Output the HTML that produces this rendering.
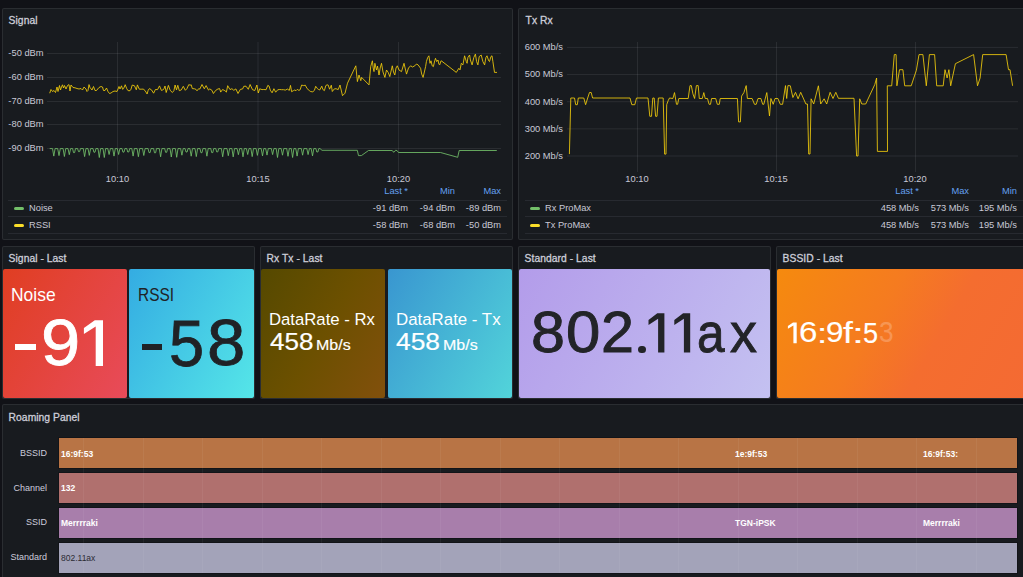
<!DOCTYPE html>
<html><head><meta charset="utf-8">
<style>
*{box-sizing:border-box;margin:0;padding:0}
html,body{width:1023px;height:577px;overflow:hidden;background:#111217;font-family:"Liberation Sans", sans-serif;color:#ccccdc}
.p{position:absolute;background:#181b1f;border:1px solid rgba(204,204,220,0.10);border-radius:2px;overflow:hidden}
.t{position:absolute;font-size:10.3px;letter-spacing:0.05px;font-weight:normal;-webkit-text-stroke:0.3px #cdced9;color:#cdced9;white-space:nowrap}
.a{position:absolute;font-size:9.3px;color:#c8c9d6;white-space:nowrap}
.ar{text-align:right}
.ac{text-align:center}
.lg{position:absolute;height:1px;background:rgba(204,204,220,0.09)}
.hd{position:absolute;font-size:9.3px;color:#64a0f0;white-space:nowrap;text-align:right}
.box{position:absolute;overflow:hidden;border-radius:2px}
.sw{position:absolute;width:10px;height:3px;border-radius:2px}
.bar{position:absolute;left:59px;width:957.5px;height:30.2px;box-shadow:0 0 0 1px rgba(12,13,17,0.5)}
.bt{position:absolute;font-size:8.5px;font-weight:bold;color:#fff;white-space:nowrap}
.bl{position:absolute;font-size:9px;color:#ccccdc;text-align:right;width:40px;left:7px}
</style></head><body>
<div class="p" style="left:2px;top:8px;width:511px;height:232px"></div>
<div class="p" style="left:518px;top:8px;width:520px;height:232px"></div>
<div class="t" style="left:8.6px;top:14.5px">Signal</div>
<div class="t" style="left:525.6px;top:14.5px">Tx Rx</div>
<svg style="position:absolute;left:0;top:0" width="1023" height="577"><line x1="47" y1="53.5" x2="501" y2="53.5" stroke="rgba(204,204,220,0.10)" stroke-width="1"/><line x1="47" y1="77.5" x2="501" y2="77.5" stroke="rgba(204,204,220,0.10)" stroke-width="1"/><line x1="47" y1="101.5" x2="501" y2="101.5" stroke="rgba(204,204,220,0.10)" stroke-width="1"/><line x1="47" y1="124.5" x2="501" y2="124.5" stroke="rgba(204,204,220,0.10)" stroke-width="1"/><line x1="47" y1="148.5" x2="501" y2="148.5" stroke="rgba(204,204,220,0.10)" stroke-width="1"/><line x1="117.5" y1="42" x2="117.5" y2="172" stroke="rgba(204,204,220,0.10)" stroke-width="1"/><line x1="258" y1="42" x2="258" y2="172" stroke="rgba(204,204,220,0.10)" stroke-width="1"/><line x1="398.5" y1="42" x2="398.5" y2="172" stroke="rgba(204,204,220,0.10)" stroke-width="1"/><line x1="567" y1="47.4" x2="1018" y2="47.4" stroke="rgba(204,204,220,0.10)" stroke-width="1"/><line x1="567" y1="74.55" x2="1018" y2="74.55" stroke="rgba(204,204,220,0.10)" stroke-width="1"/><line x1="567" y1="101.7" x2="1018" y2="101.7" stroke="rgba(204,204,220,0.10)" stroke-width="1"/><line x1="567" y1="128.85" x2="1018" y2="128.85" stroke="rgba(204,204,220,0.10)" stroke-width="1"/><line x1="567" y1="156" x2="1018" y2="156" stroke="rgba(204,204,220,0.10)" stroke-width="1"/><line x1="637.5" y1="42" x2="637.5" y2="172" stroke="rgba(204,204,220,0.10)" stroke-width="1"/><line x1="776.5" y1="42" x2="776.5" y2="172" stroke="rgba(204,204,220,0.10)" stroke-width="1"/><line x1="915.5" y1="42" x2="915.5" y2="172" stroke="rgba(204,204,220,0.10)" stroke-width="1"/><polyline points="49.7,148.6 52.5,148.6 53.8,156.1 55.1,148.6 57.7,148.6 59.0,155.6 60.3,148.6 63.1,148.6 64.4,156.5 65.7,148.6 68.0,148.6 69.3,154.7 70.6,148.6 72.6,148.6 73.5,152.6 74.6,152.6 75.5,148.6 77.6,148.6 78.5,151.6 79.6,151.6 80.5,148.6 83.3,148.6 84.6,156.6 85.9,148.6 88.0,148.6 89.3,155.4 90.6,148.6 93.0,148.6 93.9,152.2 95.0,152.2 95.9,148.6 98.0,148.6 99.3,157.5 100.6,148.6 103.0,148.6 104.3,157.5 105.6,148.6 107.8,148.6 109.1,154.5 110.4,148.6 112.7,148.6 114.0,156.1 115.3,148.6 117.3,148.6 118.6,154.5 119.9,148.6 122.0,148.6 122.9,152.1 124.0,152.1 124.9,148.6 126.8,148.6 127.7,152.0 128.8,152.0 129.7,148.6 131.8,148.6 133.1,156.1 134.4,148.6 137.1,148.6 138.4,156.7 139.7,148.6 142.5,148.6 143.8,155.5 145.1,148.6 148.1,148.6 149.0,152.6 150.1,152.6 151.0,148.6 153.6,148.6 154.5,152.8 155.6,152.8 156.5,148.6 159.3,148.6 160.6,156.8 161.9,148.6 164.7,148.6 165.6,152.3 166.7,152.3 167.6,148.6 170.0,148.6 171.3,157.0 172.6,148.6 175.4,148.6 176.7,157.3 178.0,148.6 180.6,148.6 181.9,155.2 183.2,148.6 185.1,148.6 186.0,152.0 187.1,152.0 188.0,148.6 189.9,148.6 191.2,156.2 192.5,148.6 195.0,148.6 196.3,156.6 197.6,148.6 200.0,148.6 200.9,152.7 202.0,152.7 202.9,148.6 205.6,148.6 206.9,156.2 208.2,148.6 210.8,148.6 211.7,152.6 212.8,152.6 213.7,148.6 215.8,148.6 216.7,151.9 217.8,151.9 218.7,148.6 221.4,148.6 222.7,156.8 224.0,148.6 227.0,148.6 228.3,155.7 229.6,148.6 231.9,148.6 233.2,156.9 234.5,148.6 237.1,148.6 238.4,154.7 239.7,148.6 241.7,148.6 243.0,156.8 244.3,148.6 246.4,148.6 247.7,154.5 249.0,148.6 250.9,148.6 252.2,156.6 253.5,148.6 256.1,148.6 257.4,155.4 258.7,148.6 261.2,148.6 262.5,155.9 263.8,148.6 265.7,148.6 267.0,155.1 268.3,148.6 271.3,148.6 272.6,154.6 273.9,148.6 276.2,148.6 277.5,157.5 278.8,148.6 281.2,148.6 282.5,155.2 283.8,148.6 286.7,148.6 288.0,156.3 289.3,148.6 291.3,148.6 292.6,157.5 293.9,148.6 295.8,148.6 297.1,156.1 298.4,148.6 301.3,148.6 302.6,155.2 303.9,148.6 306.8,148.6 308.1,154.6 309.4,148.6 311.2,148.6 312.5,155.9 313.8,148.6 315.9,148.6 316.8,152.0 317.9,152.0 318.8,148.6 320.0,148.6 322.0,150.3 357.3,150.3 358.5,155.6 361.4,155.6 368.5,150.5 392.0,150.5 394.0,152.3 395.5,150.3 397.0,150.5 398.5,152.5 440.5,152.5 457.7,157.3 459.2,150.5 496.8,150.5" fill="none" stroke="#73bf69" stroke-width="0.85" stroke-linejoin="round"/><polyline points="49.7,93.2 51.0,89.5 52.5,91.5 54.0,90.5 55.5,92.5 57.0,87.0 58.0,91.5 59.5,85.5 60.5,90.0 61.5,87.0 62.5,84.8 63.5,88.0 64.5,85.5 66.0,89.0 67.5,85.5 69.0,84.6 70.0,91.0 71.0,85.0 73.0,87.5 75.0,87.8 77.0,88.5 79.0,89.0 81.0,88.5 82.5,90.0 84.0,87.0 86.0,89.0 87.0,91.5 88.0,90.5 89.0,84.6 90.0,87.5 92.0,90.0 93.5,86.5 95.0,90.5 96.5,90.5 99.0,87.5 101.0,86.5 102.5,87.0 103.5,90.5 105.0,90.5 106.5,88.0 108.0,91.5 109.5,93.5 111.0,93.0 113.0,91.5 115.0,91.0 117.0,91.5 119.0,86.5 120.0,89.0 121.5,85.8 122.6,89.3 123.6,88.6 125.2,84.7 126.8,88.8 128.1,90.7 130.0,90.7 131.0,89.2 132.2,85.1 134.4,85.7 136.3,89.8 137.4,84.9 139.3,89.2 141.1,89.2 143.2,89.1 145.0,90.5 147.1,94.0 148.2,90.2 149.4,88.6 151.4,89.8 153.6,93.2 155.4,89.5 157.6,89.6 159.5,85.9 161.4,90.4 162.8,90.0 163.9,88.9 165.0,86.0 166.2,92.5 168.4,85.4 170.2,90.4 172.4,92.5 173.9,90.7 175.1,85.0 176.5,89.9 177.8,85.3 179.3,90.7 181.3,89.9 183.3,86.3 185.3,90.3 186.9,88.7 188.8,84.6 190.1,85.2 191.2,84.8 192.3,88.6 194.5,88.8 195.9,89.3 197.0,90.8 198.7,88.7 199.8,89.1 202.0,84.5 204.3,88.8 206.1,85.6 208.5,90.1 209.8,88.9 211.9,90.3 213.4,93.5 215.7,90.4 217.9,89.0 219.6,88.6 220.7,92.1 222.6,89.5 224.9,90.7 226.4,92.1 227.7,85.7 230.0,89.6 231.9,88.7 233.8,90.3 235.9,88.9 238.0,93.5 240.3,89.4 242.7,88.9 243.8,86.3 246.0,86.2 248.3,89.3 250.1,84.5 252.5,89.7 254.8,90.5 256.9,85.0 258.3,93.0 259.7,88.8 262.0,89.6 263.8,89.5 266.1,89.7 267.8,85.4 269.1,86.1 270.3,90.2 272.1,92.8 273.9,88.7 275.7,92.2 277.7,89.8 279.8,89.5 281.7,89.7 283.6,89.7 285.3,90.1 287.5,89.1 289.3,90.4 290.5,85.4 291.6,91.7 293.5,90.6 294.8,90.0 296.0,90.7 297.3,89.4 298.9,90.4 300.2,89.7 301.6,85.1 303.7,85.6 305.3,85.2 307.1,88.6 309.5,90.7 310.7,91.6 312.8,91.8 314.4,90.4 315.7,86.3 317.5,88.7 318.6,89.5 319.7,90.0 321.8,86.2 322.9,89.5 324.4,90.6 325.8,85.6 327.1,84.8 328.2,85.1 329.6,89.2 331.3,85.2 332.3,91.5 334.3,88.9 336.0,88.7 338.2,89.6 340.0,85.0 342.5,95.7 345.0,93.2 347.5,83.2 355.8,65.8 357.4,81.6 359.0,75.0 360.8,80.7 361.6,77.4 369.0,84.9 370.7,66.6 372.4,60.8 373.2,68.0 374.0,71.6 374.9,63.3 376.5,70.0 377.5,66.0 379.0,75.0 380.2,68.0 381.5,63.3 383.0,72.0 384.9,77.4 386.5,70.0 388.2,72.4 389.8,76.6 392.3,65.8 393.5,72.0 394.8,75.0 396.0,68.0 397.3,65.8 399.0,70.0 401.5,71.6 404.0,63.3 406.5,74.1 408.5,68.0 410.6,65.8 412.5,67.0 414.8,65.8 416.5,64.0 418.1,64.9 420.6,68.3 421.7,74.1 423.1,77.4 425.6,66.6 426.4,61.6 427.7,57.5 428.9,55.8 430.0,63.3 431.0,60.8 432.2,65.8 433.4,66.6 434.7,60.8 435.5,58.3 436.7,61.6 438.0,60.0 438.9,64.1 439.7,64.9 441.0,60.8 441.7,61.1 456.3,72.4 458.8,68.3 460.0,69.9 461.3,63.3 462.9,64.9 464.6,55.8 466.3,61.6 467.1,63.3 467.9,57.5 469.6,55.0 470.4,60.0 472.1,64.9 473.8,57.5 475.4,54.1 476.6,61.6 477.9,64.9 479.2,56.6 481.2,55.0 482.9,61.6 484.6,64.9 485.9,57.5 487.0,55.8 488.7,60.8 489.5,61.6 490.9,56.6 492.0,55.8 492.9,61.6 494.5,72.4 497.0,72.4" fill="none" stroke="#f2cc0c" stroke-width="0.85" stroke-linejoin="round"/><polyline points="569.4,154.1 570.8,98.0 574.5,98.0 575.7,104.7 577.3,104.7 578.3,98.0 583.8,98.0 585.6,104.7 587.7,98.0 589.5,92.5 591.2,92.5 592.6,98.0 630.0,98.0 631.8,104.7 634.8,104.7 636.5,98.0 648.0,98.0 649.8,116.3 651.5,116.3 652.8,98.0 654.2,98.0 655.6,116.3 657.0,116.3 658.4,98.0 663.2,98.0 664.6,154.1 666.0,154.1 666.7,104.7 668.1,100.8 669.5,98.0 672.9,98.5 674.5,92.6 676.5,104.3 677.6,104.3 678.8,98.5 688.2,98.5 690.0,85.6 691.3,85.6 692.9,93.8 694.6,98.5 696.4,85.6 698.2,85.6 699.3,98.5 702.3,98.5 703.8,92.6 705.2,98.5 707.5,98.5 709.1,104.3 710.5,104.3 711.6,98.5 715.7,98.5 717.3,104.3 719.3,104.3 720.2,98.5 737.4,98.5 738.6,121.9 740.4,121.9 741.6,96.1 743.9,92.6 746.2,85.6 747.4,98.5 752.1,98.5 754.5,104.3 756.2,104.3 758.0,98.5 760.9,98.5 762.7,104.3 763.8,104.3 766.8,92.6 769.5,116.0 770.9,98.5 773.2,104.3 775.0,98.5 777.9,98.5 780.3,104.3 782.6,104.3 785.5,85.6 786.7,98.5 787.9,85.6 790.3,85.8 792.9,97.5 795.5,92.3 798.1,98.8 800.7,92.3 805.9,104.0 807.5,104.0 808.7,154.0 810.0,154.0 811.1,98.8 813.7,104.0 818.4,85.8 820.7,104.0 824.1,98.8 826.7,104.0 830.1,92.3 833.0,98.5 835.8,92.3 838.4,98.3 854.0,98.3 856.6,156.0 858.0,156.0 859.7,98.8 861.8,104.0 865.7,104.0 874.8,84.5 876.6,78.0 877.4,151.4 887.5,151.4 887.3,85.8 891.7,85.8 893.0,70.2 894.3,54.6 896.1,54.6 896.9,85.8 899.5,69.7 902.9,69.7 904.7,85.8 911.2,85.8 916.4,70.2 919.0,54.6 922.9,54.6 926.3,85.8 929.4,54.6 934.6,54.6 936.7,85.8 943.2,85.8 945.0,69.7 947.1,78.0 948.9,69.7 950.7,85.8 955.4,63.7 973.6,54.6 977.5,85.8 980.1,78.0 982.7,54.6 1006.1,54.6 1008.5,69.7 1010.0,69.7 1012.6,85.8" fill="none" stroke="#f2cc0c" stroke-width="0.85" stroke-linejoin="miter" stroke-miterlimit="2.5"/></svg>
<div class="a ar" style="left:0;width:43.5px;top:48.0px">-50 dBm</div>
<div class="a ar" style="left:0;width:43.5px;top:72.0px">-60 dBm</div>
<div class="a ar" style="left:0;width:43.5px;top:96.0px">-70 dBm</div>
<div class="a ar" style="left:0;width:43.5px;top:119.0px">-80 dBm</div>
<div class="a ar" style="left:0;width:43.5px;top:143.0px">-90 dBm</div>
<div class="a ar" style="left:500px;width:63px;top:42.199999999999996px">600 Mb/s</div>
<div class="a ar" style="left:500px;width:63px;top:69.35px">500 Mb/s</div>
<div class="a ar" style="left:500px;width:63px;top:96.5px">400 Mb/s</div>
<div class="a ar" style="left:500px;width:63px;top:123.64999999999999px">300 Mb/s</div>
<div class="a ar" style="left:500px;width:63px;top:150.8px">200 Mb/s</div>
<div class="a ac" style="left:87.5px;width:60px;top:174px">10:10</div>
<div class="a ac" style="left:228px;width:60px;top:174px">10:15</div>
<div class="a ac" style="left:368.5px;width:60px;top:174px">10:20</div>
<div class="a ac" style="left:607px;width:60px;top:174px">10:10</div>
<div class="a ac" style="left:746px;width:60px;top:174px">10:15</div>
<div class="a ac" style="left:885px;width:60px;top:174px">10:20</div>
<div class="lg" style="left:8px;top:200px;width:499px"></div>
<div class="lg" style="left:8px;top:216px;width:499px"></div>
<div class="lg" style="left:8px;top:233px;width:499px"></div>
<div class="lg" style="left:525px;top:200px;width:498px"></div>
<div class="lg" style="left:525px;top:216px;width:498px"></div>
<div class="lg" style="left:525px;top:233px;width:498px"></div>
<div class="sw" style="left:14px;top:207px;background:#73bf69"></div><div class="a" style="left:29px;top:203px">Noise</div>
<div class="sw" style="left:14px;top:224px;background:#fade2a"></div><div class="a" style="left:29px;top:220px">RSSI</div>
<div class="sw" style="left:530px;top:207px;background:#73bf69"></div><div class="a" style="left:545px;top:203px">Rx ProMax</div>
<div class="sw" style="left:530px;top:224px;background:#fade2a"></div><div class="a" style="left:545px;top:220px">Tx ProMax</div>
<div class="hd" style="right:615px;top:186px">Last *</div>
<div class="hd" style="right:568px;top:186px">Min</div>
<div class="hd" style="right:522px;top:186px">Max</div>
<div class="a" style="right:615px;top:203px">-91 dBm</div>
<div class="a" style="right:568px;top:203px">-94 dBm</div>
<div class="a" style="right:522px;top:203px">-89 dBm</div>
<div class="a" style="right:615px;top:220px">-58 dBm</div>
<div class="a" style="right:568px;top:220px">-68 dBm</div>
<div class="a" style="right:522px;top:220px">-50 dBm</div>
<div class="hd" style="right:104px;top:186px">Last *</div>
<div class="hd" style="right:54px;top:186px">Max</div>
<div class="hd" style="right:6px;top:186px">Min</div>
<div class="a" style="right:104px;top:203px">458 Mb/s</div>
<div class="a" style="right:54px;top:203px">573 Mb/s</div>
<div class="a" style="right:6px;top:203px">195 Mb/s</div>
<div class="a" style="right:104px;top:220px">458 Mb/s</div>
<div class="a" style="right:54px;top:220px">573 Mb/s</div>
<div class="a" style="right:6px;top:220px">195 Mb/s</div>
<div class="p" style="left:2px;top:246px;width:253px;height:153px"></div>
<div class="p" style="left:260px;top:246px;width:253px;height:153px"></div>
<div class="p" style="left:518px;top:246px;width:253px;height:153px"></div>
<div class="p" style="left:776px;top:246px;width:260px;height:153px"></div>
<div class="t" style="left:8.6px;top:252.7px">Signal - Last</div>
<div class="t" style="left:266.6px;top:252.7px">Rx Tx - Last</div>
<div class="t" style="left:524.6px;top:252.7px">Standard - Last</div>
<div class="t" style="left:782.6px;top:252.7px">BSSID - Last</div>
<div class="box" style="left:3px;top:269px;width:124.4px;height:129px;border-radius:2px;background:linear-gradient(120deg,#e03e22,#e84b5a)"></div>
<div class="box" style="left:129.4px;top:269px;width:124.8px;height:129px;border-radius:2px;background:linear-gradient(120deg,#34ace2,#55e6e8)"></div>
<div class="box" style="left:261px;top:269px;width:124px;height:129px;background:linear-gradient(120deg,#554900,#6c5000 50%,#82500c)"></div>
<div class="box" style="left:388px;top:269px;width:124px;height:129px;background:linear-gradient(120deg,#3996d0,#52d4da)"></div>
<div class="box" style="left:519px;top:269px;width:251px;height:129px;background:linear-gradient(120deg,#b39cea,#c4c1f1)"></div>
<div class="box" style="left:777px;top:269px;width:250px;height:129px;background:linear-gradient(120deg,#f58a0e 0%,#f57b20 40%,#f46d2f 62%,#f46a33 100%)"></div>
<div style="position:absolute;left:10.50px;top:286.51px;font-size:17.59px;line-height:1;font-weight:400;color:#ffffff;white-space:pre;transform:scaleX(0.9921);transform-origin:0 0;">Noise</div>
<div style="position:absolute;left:137.67px;top:286.51px;font-size:17.59px;line-height:1;font-weight:400;color:#202226;white-space:pre;transform:scaleX(0.8766);transform-origin:0 0;">RSSI</div>
<div style="position:absolute;left:15.1px;top:344.1px;width:20.90px;height:5.50px;background:#ffffff"></div>
<div style="position:absolute;left:41.03px;top:310.28px;font-size:65.63px;line-height:1;font-weight:400;color:#ffffff;white-space:pre;transform:scaleX(1.0747);transform-origin:0 0;-webkit-text-stroke:0.8px #fff">9</div>
<svg style="position:absolute;left:0;top:0;" width="1023" height="577"><polygon points="83.9,328.0 94.8,320.2 103.0,320.2 103.0,366.0 95.7,366.0 95.7,326.6 83.9,333.9" fill="#ffffff"/></svg>
<div style="position:absolute;left:142px;top:344.2px;width:20.00px;height:5.50px;background:#202226"></div>
<div style="position:absolute;left:168.87px;top:310.80px;font-size:65.14px;line-height:1;font-weight:400;color:#202226;white-space:pre;transform:scaleX(0.9695);transform-origin:0 0;-webkit-text-stroke:0.8px #202226">5</div>
<div style="position:absolute;left:206.90px;top:310.28px;font-size:65.63px;line-height:1;font-weight:400;color:#202226;white-space:pre;transform:scaleX(1.0503);transform-origin:0 0;-webkit-text-stroke:0.8px #202226">8</div>
<div style="position:absolute;left:268.56px;top:311.24px;font-size:16.13px;line-height:1;font-weight:400;color:#ffffff;white-space:pre;transform:scaleX(1.0370);transform-origin:0 0;">DataRate - Rx</div>
<div style="position:absolute;left:395.55px;top:311.24px;font-size:16.13px;line-height:1;font-weight:400;color:#ffffff;white-space:pre;transform:scaleX(1.0460);transform-origin:0 0;">DataRate - Tx</div>
<div style="position:absolute;left:269.85px;top:330.95px;font-size:23.10px;line-height:1;font-weight:400;color:#ffffff;white-space:pre;transform:scaleX(1.1256);transform-origin:0 0;-webkit-text-stroke:0.2px #fff">458</div>
<div style="position:absolute;left:316.12px;top:337.13px;font-size:15.55px;line-height:1;font-weight:400;color:#ffffff;white-space:pre;transform:scaleX(1.0288);transform-origin:0 0;-webkit-text-stroke:0.2px #fff">Mb/s</div>
<div style="position:absolute;left:396.24px;top:330.95px;font-size:23.10px;line-height:1;font-weight:400;color:#ffffff;white-space:pre;transform:scaleX(1.1418);transform-origin:0 0;-webkit-text-stroke:0.2px #fff">458</div>
<div style="position:absolute;left:442.52px;top:337.13px;font-size:15.55px;line-height:1;font-weight:400;color:#ffffff;white-space:pre;transform:scaleX(1.0288);transform-origin:0 0;-webkit-text-stroke:0.2px #fff">Mb/s</div>
<div style="position:absolute;left:531.15px;top:304.33px;font-size:57.04px;line-height:1;font-weight:400;color:#232428;white-space:pre;transform:scaleX(1.0705);transform-origin:0 0;-webkit-text-stroke:0.9px #232428">8</div>
<div style="position:absolute;left:566.03px;top:304.33px;font-size:57.04px;line-height:1;font-weight:400;color:#232428;white-space:pre;transform:scaleX(1.0814);transform-origin:0 0;-webkit-text-stroke:0.9px #232428">0</div>
<div style="position:absolute;left:601.23px;top:304.31px;font-size:57.14px;line-height:1;font-weight:400;color:#232428;white-space:pre;transform:scaleX(1.0385);transform-origin:0 0;-webkit-text-stroke:0.9px #232428">2</div>
<div style="position:absolute;left:638.3px;top:345.5px;width:7.6px;height:7.6px;border-radius:50%;background:#232428"></div>
<svg style="position:absolute;left:0;top:0;" width="1023" height="577"><polygon points="648.5,319.9 657.3,313.2 664.4,313.2 664.4,352.6 658.1,352.6 658.1,318.7 648.5,325.0" fill="#232428"/></svg>
<svg style="position:absolute;left:0;top:0;" width="1023" height="577"><polygon points="674.3,319.9 683.1,313.2 690.2,313.2 690.2,352.6 683.9,352.6 683.9,318.7 674.3,325.0" fill="#232428"/></svg>
<div style="position:absolute;left:697.27px;top:305.69px;font-size:55.45px;line-height:1;font-weight:400;color:#232428;white-space:pre;transform:scaleX(0.8946);transform-origin:0 0;-webkit-text-stroke:0.9px #232428">a</div>
<div style="position:absolute;left:729.79px;top:305.79px;font-size:55.28px;line-height:1;font-weight:400;color:#232428;white-space:pre;transform:scaleX(0.9737);transform-origin:0 0;-webkit-text-stroke:0.9px #232428">x</div>
<svg style="position:absolute;left:0;top:0;" width="1023" height="577"><polygon points="787.9,326.1 793.0,322.6 796.7,322.6 796.7,343.2 793.4,343.2 793.4,325.5 787.9,328.8" fill="#ffffff"/></svg>
<div style="position:absolute;left:799.15px;top:318.39px;font-size:29.01px;line-height:1;font-weight:400;color:#ffffff;white-space:pre;transform:scaleX(1.1389);transform-origin:0 0;-webkit-text-stroke:0.15px #fff">6</div>
<div style="position:absolute;left:816.78px;top:319.76px;font-size:27.74px;line-height:1;font-weight:400;color:#ffffff;white-space:pre;transform:scaleX(1.3283);transform-origin:0 0;-webkit-text-stroke:0.15px #fff">:</div>
<div style="position:absolute;left:825.79px;top:318.39px;font-size:29.01px;line-height:1;font-weight:400;color:#ffffff;white-space:pre;transform:scaleX(1.0822);transform-origin:0 0;-webkit-text-stroke:0.15px #fff">9</div>
<div style="position:absolute;left:843.07px;top:318.52px;font-size:28.97px;line-height:1;font-weight:400;color:#ffffff;white-space:pre;transform:scaleX(1.2246);transform-origin:0 0;-webkit-text-stroke:0.15px #fff">f</div>
<div style="position:absolute;left:852.02px;top:319.76px;font-size:27.74px;line-height:1;font-weight:400;color:#ffffff;white-space:pre;transform:scaleX(1.5560);transform-origin:0 0;-webkit-text-stroke:0.15px #fff">:</div>
<div style="position:absolute;left:863.01px;top:318.04px;font-size:29.43px;line-height:1;font-weight:400;color:#ffffff;white-space:pre;transform:scaleX(0.9228);transform-origin:0 0;-webkit-text-stroke:0.15px #fff">5</div>
<div style="position:absolute;left:878.95px;top:318.39px;font-size:29.01px;line-height:1;font-weight:400;color:#ffffff;white-space:pre;transform:scaleX(0.9020);transform-origin:0 0;opacity:0.22">3</div>
<div class="p" style="left:2px;top:404px;width:1030px;height:190px"></div>
<div class="t" style="left:8.6px;top:411.5px">Roaming Panel</div>
<div class="bar" style="top:438.3px;background:#b87445"></div>
<div class="bl" style="top:447.90000000000003px">BSSID</div>
<div class="bar" style="top:473px;background:#b0706e"></div>
<div class="bl" style="top:482.6px">Channel</div>
<div class="bar" style="top:507.8px;background:#a87eab"></div>
<div class="bl" style="top:517.4px">SSID</div>
<div class="bar" style="top:542.5px;background:#a3a3b9"></div>
<div class="bl" style="top:552.1px">Standard</div>
<div style="position:absolute;left:83.4px;top:438px;width:1px;height:135px;background:rgba(255,255,255,0.05)"></div><div style="position:absolute;left:142.9px;top:438px;width:1px;height:135px;background:rgba(255,255,255,0.05)"></div><div style="position:absolute;left:202.3px;top:438px;width:1px;height:135px;background:rgba(255,255,255,0.05)"></div><div style="position:absolute;left:261.8px;top:438px;width:1px;height:135px;background:rgba(255,255,255,0.05)"></div><div style="position:absolute;left:321.3px;top:438px;width:1px;height:135px;background:rgba(255,255,255,0.05)"></div><div style="position:absolute;left:380.8px;top:438px;width:1px;height:135px;background:rgba(255,255,255,0.05)"></div><div style="position:absolute;left:440.2px;top:438px;width:1px;height:135px;background:rgba(255,255,255,0.05)"></div><div style="position:absolute;left:499.7px;top:438px;width:1px;height:135px;background:rgba(255,255,255,0.05)"></div><div style="position:absolute;left:559.2px;top:438px;width:1px;height:135px;background:rgba(255,255,255,0.05)"></div><div style="position:absolute;left:618.6px;top:438px;width:1px;height:135px;background:rgba(255,255,255,0.05)"></div><div style="position:absolute;left:678.1px;top:438px;width:1px;height:135px;background:rgba(255,255,255,0.05)"></div><div style="position:absolute;left:737.6px;top:438px;width:1px;height:135px;background:rgba(255,255,255,0.05)"></div><div style="position:absolute;left:797.0px;top:438px;width:1px;height:135px;background:rgba(255,255,255,0.05)"></div><div style="position:absolute;left:856.5px;top:438px;width:1px;height:135px;background:rgba(255,255,255,0.05)"></div><div style="position:absolute;left:916.0px;top:438px;width:1px;height:135px;background:rgba(255,255,255,0.05)"></div><div style="position:absolute;left:975.5px;top:438px;width:1px;height:135px;background:rgba(255,255,255,0.05)"></div>
<div class="bt" style="left:61px;top:448.5px">16:9f:53</div>
<div class="bt" style="left:735px;top:448.5px">1e:9f:53</div>
<div class="bt" style="left:923px;top:448.5px">16:9f:53:</div>
<div class="bt" style="left:61px;top:483.2px">132</div>
<div class="bt" style="left:61px;top:518px">Merrrraki</div>
<div class="bt" style="left:735px;top:518px">TGN-iPSK</div>
<div class="bt" style="left:923px;top:518px">Merrrraki</div>
<div class="bt" style="left:61px;top:552.8px;color:#2b2b33;font-weight:normal">802.11ax</div>
</body></html>
